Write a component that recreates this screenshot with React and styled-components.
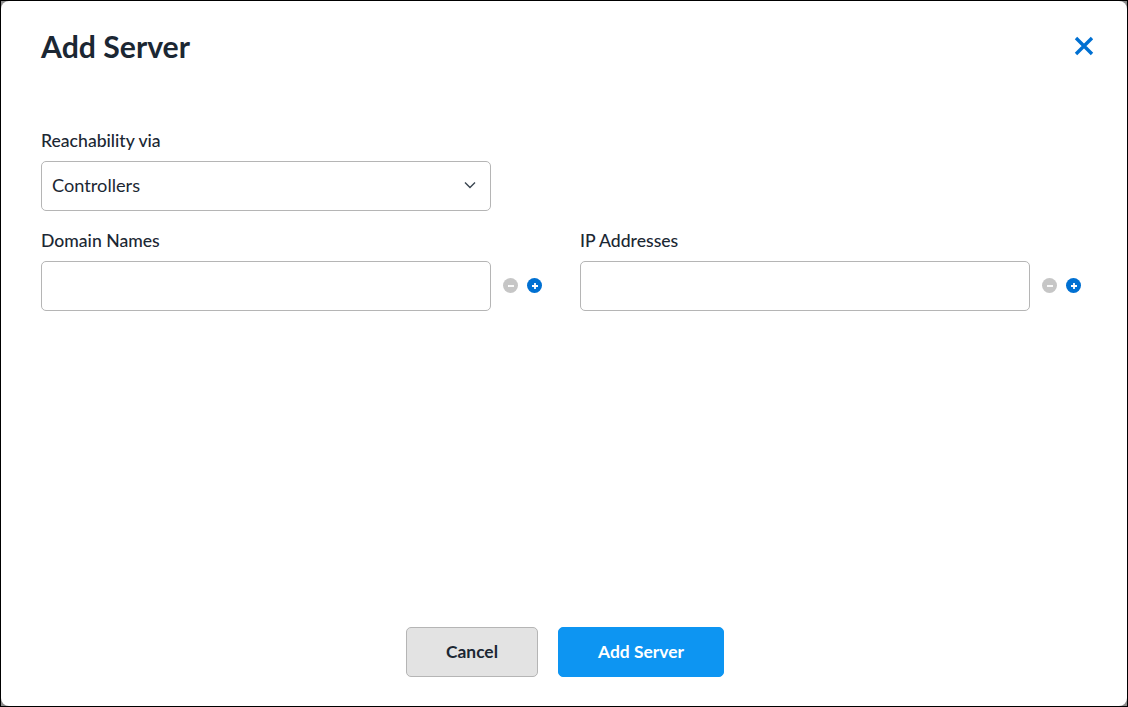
import React from "react";
import styled, { createGlobalStyle } from "styled-components";

const Global = createGlobalStyle`
  html, body { margin: 0; padding: 0; background: #fff; }
  * { box-sizing: border-box; }
`;

const Frame = styled.div`
  width: 1128px;
  height: 707px;
  border: 1px solid #000;
  background: #8c8c8c;
`;

const Dialog = styled.div`
  height: 100%;
  background: #fff;
  border-radius: 8px;
  padding: 0 32px 29px 40px;
  display: flex;
  flex-direction: column;
  font-family: Lato, sans-serif;
  color: #1b2733;
  overflow: hidden;
`;

const Header = styled.header`
  height: 126px;
  padding-top: 26px;
  display: flex;
  justify-content: space-between;
  align-items: flex-start;
`;

const Title = styled.h1`
  margin: 0;
  font-size: 30.2px;
  line-height: 38px;
  font-weight: 700;
`;

const CloseButton = styled.button`
  border: 0;
  background: none;
  padding: 0;
  margin: 8px 0 0;
  width: 22px;
  height: 22px;
  display: block;
  color: #0070d2;
`;

const Body = styled.div`
  flex: 1;
  display: flex;
  flex-direction: column;
`;

const Label = styled.label`
  display: block;
  height: 27px;
  padding-top: 4px;
  font-size: 17.6px;
  line-height: 20px;
  font-weight: 500;
  margin-bottom: 7px;
`;

const Field = styled.div`
  flex: none;
  width: 450px;
  height: 50px;
  border: 1px solid #b5b5b5;
  border-radius: 5px;
  background: #fff;
  display: flex;
  align-items: center;
  justify-content: space-between;
  padding: 0 14px 2px 10px;
  font-size: 18.2px;
  color: #1b2733;
`;

const Section = styled.section`
  margin-bottom: 16px;
`;

const Row = styled.div`
  display: flex;
  gap: 37px;
`;

const Group = styled.div`
  width: 502px;
`;

const FieldLine = styled.div`
  display: flex;
  align-items: center;
  gap: 9px;
`;

const IconGroup = styled.div`
  display: flex;
  align-items: center;
  gap: 9px;
  margin: 0 0 1px 3.3px;
`;

const RoundIcon = styled.button`
  border: 0;
  padding: 0;
  background: ${(p) => (p.$add ? "#0070d2" : "#c6c6c6")};
  width: 15px;
  height: 15px;
  border-radius: 50%;
  display: flex;
  align-items: center;
  justify-content: center;
`;

const Actions = styled.footer`
  display: flex;
  justify-content: center;
  gap: 20px;
  margin-right: 6px;
`;

const Btn = styled.button`
  height: 50px;
  width: ${(p) => (p.$primary ? "166px" : "132px")};
  border-radius: 5px;
  border: 1px solid ${(p) => (p.$primary ? "#0d95f2" : "#b5b5b5")};
  background: ${(p) => (p.$primary ? "#0d95f2" : "#e3e3e3")};
  color: ${(p) => (p.$primary ? "#fff" : "#1b2733")};
  font-family: Lato, sans-serif;
  font-size: 17.4px;
  font-weight: 700;
  padding: 0 0 2px;
`;

const Controls = () => (
  <IconGroup>
    <RoundIcon aria-label="Remove">
      <svg width="8" height="8" viewBox="0 0 8 8"><path d="M1 4h6" stroke="#fff" strokeWidth="1.8" /></svg>
    </RoundIcon>
    <RoundIcon $add aria-label="Add">
      <svg width="8" height="8" viewBox="0 0 8 8"><path d="M1 4h6M4 1v6" stroke="#fff" strokeWidth="1.8" /></svg>
    </RoundIcon>
  </IconGroup>
);

export default function App() {
  return (
    <>
      <Global />
      <Frame>
        <Dialog>
          <Header>
            <Title>Add Server</Title>
            <CloseButton aria-label="Close">
              <svg width="22" height="22" viewBox="0 0 22 22">
                <path d="M3 3l16 16M19 3L3 19" stroke="currentColor" strokeWidth="3.4" fill="none" />
              </svg>
            </CloseButton>
          </Header>
          <Body>
            <Section>
              <Label>Reachability via</Label>
              <Field>
                Controllers
                <svg width="12" height="8" viewBox="0 0 12 8">
                  <path d="M1 1.5l5 5 5-5" stroke="#3a4550" strokeWidth="1.4" fill="none" />
                </svg>
              </Field>
            </Section>
            <Row>
              <Group>
                <Label>Domain Names</Label>
                <FieldLine><Field /><Controls /></FieldLine>
              </Group>
              <Group>
                <Label>IP Addresses</Label>
                <FieldLine><Field /><Controls /></FieldLine>
              </Group>
            </Row>
          </Body>
          <Actions>
            <Btn>Cancel</Btn>
            <Btn $primary>Add Server</Btn>
          </Actions>
        </Dialog>
      </Frame>
    </>
  );
}
